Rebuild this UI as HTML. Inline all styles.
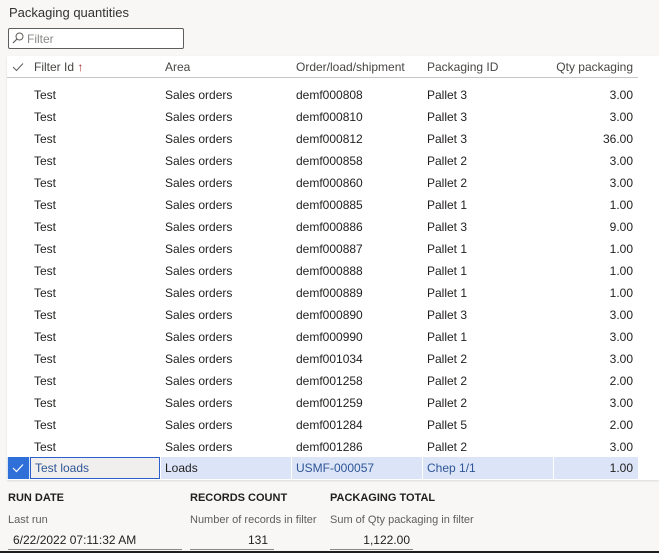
<!DOCTYPE html>
<html><head><style>
body{margin:0;width:659px;height:553px;background:#f8f7f6;font-family:"Liberation Sans",sans-serif;font-size:12px;color:#201f1e;position:relative;overflow:hidden}
.a{position:absolute;white-space:nowrap}
.grid{position:absolute;left:7px;top:56px;width:652px;height:424px;background:#fff;box-shadow:0 1px 2px rgba(0,0,0,.12)}
.hd{color:#484644}
.row{position:absolute;left:0;width:652px;height:22px;line-height:22px}
.row span{position:absolute}
</style></head><body>
<div class="a" style="left:9px;top:5px;font-size:13px;color:#323130">Packaging quantities</div>
<div class="a" style="left:8px;top:28px;width:174px;height:19px;border:1px solid #605e5c;border-radius:2px;background:#fff"></div>
<svg class="a" style="left:12px;top:32px" width="12" height="12" viewBox="0 0 12 12"><circle cx="7.5" cy="4.5" r="3.5" fill="none" stroke="#605e5c" stroke-width="1"/><line x1="5" y1="7" x2="1" y2="11" stroke="#605e5c" stroke-width="1.2"/></svg>
<div class="a" style="left:27px;top:32px;color:#8a8886">Filter</div>
<div class="grid">
<svg class="a" style="left:5px;top:6px" width="12" height="10"><path d="M1 5 L4.5 8.5 L11 1.5" fill="none" stroke="#605e5c" stroke-width="1"/></svg>
<div class="a hd" style="left:27px;top:4px">Filter Id <span style="color:#a4262c">↑</span></div>
<div class="a hd" style="left:158px;top:4px">Area</div>
<div class="a hd" style="left:289px;top:4px">Order/load/shipment</div>
<div class="a hd" style="left:420px;top:4px">Packaging ID</div>
<div class="a hd" style="right:26px;top:4px">Qty packaging</div>
<div class="a" style="left:0;top:21px;width:631px;height:1px;background:#c8c6c4"></div>
<div id="rows"></div>
</div>
<div class="a" style="left:8px;top:492px;font-weight:bold;font-size:11px">RUN DATE</div>
<div class="a" style="left:190px;top:492px;font-weight:bold;font-size:11px">RECORDS COUNT</div>
<div class="a" style="left:330px;top:492px;font-weight:bold;font-size:11px">PACKAGING TOTAL</div>
<div class="a" style="left:8px;top:514px;font-size:11px;color:#605e5c">Last run</div>
<div class="a" style="left:190px;top:514px;font-size:11px;color:#605e5c">Number of records in filter</div>
<div class="a" style="left:330px;top:514px;font-size:11px;color:#605e5c">Sum of Qty packaging in filter</div>
<div class="a" style="left:13px;top:533px">6/22/2022 07:11:32 AM</div>
<div class="a" style="left:8px;top:549px;width:174px;height:1px;background:#8a8886"></div>
<div class="a" style="left:190px;top:533px;width:78px;text-align:right">131</div>
<div class="a" style="left:190px;top:549px;width:84px;height:1px;background:#8a8886"></div>
<div class="a" style="left:330px;top:533px;width:80px;text-align:right">1,122.00</div>
<div class="a" style="left:330px;top:549px;width:83px;height:1px;background:#8a8886"></div>
<div class="a" style="left:0;top:551px;width:659px;height:2px;background:#201f1e"></div>
<script>
var d=[["000808","3","3.00"],["000810","3","3.00"],["000812","3","36.00"],["000858","2","3.00"],["000860","2","3.00"],["000885","1","1.00"],["000886","3","9.00"],["000887","1","1.00"],["000888","1","1.00"],["000889","1","1.00"],["000890","3","3.00"],["000990","1","3.00"],["001034","2","3.00"],["001258","2","2.00"],["001259","2","3.00"],["001284","5","2.00"],["001286","2","3.00"]];
var h="";
d.forEach(function(r,i){h+='<div class="row" style="top:'+(28+22*i)+'px"><span style="left:27px">Test</span><span style="left:158px">Sales orders</span><span style="left:289px">demf'+r[0]+'</span><span style="left:420px">Pallet '+r[1]+'</span><span style="right:26px">'+r[2]+'</span></div>';});
h+='<div class="row" style="top:401px;width:631px;background:#dbe5f7">'+
'<span style="left:1px;top:0;width:21px;height:22px;background:#2f6fd8"></span>'+
'<svg style="position:absolute;left:5px;top:6px" width="12" height="10"><path d="M1 5 L4.5 8.5 L11 1.5" fill="none" stroke="#fff" stroke-width="1.2"/></svg>'+
'<span style="left:23px;top:0;width:130px;height:22px;border:1px solid #2b5fcc;background:#f0efee;line-height:20px;padding-left:4px;box-sizing:border-box;color:#2f5596">Test loads</span>'+
'<span style="left:153px;top:0;width:1px;height:22px;background:#fff"></span>'+
'<span style="left:158px">Loads</span>'+
'<span style="left:284px;top:0;width:1px;height:22px;background:#fff"></span>'+
'<span style="left:289px;color:#2f5596">USMF-000057</span>'+
'<span style="left:415px;top:0;width:1px;height:22px;background:#fff"></span>'+
'<span style="left:420px;color:#2f5596">Chep 1/1</span>'+
'<span style="left:546px;top:0;width:1px;height:22px;background:#fff"></span>'+
'<span style="right:5px">1.00</span></div>';
document.getElementById("rows").innerHTML=h;
</script>
</body></html>
